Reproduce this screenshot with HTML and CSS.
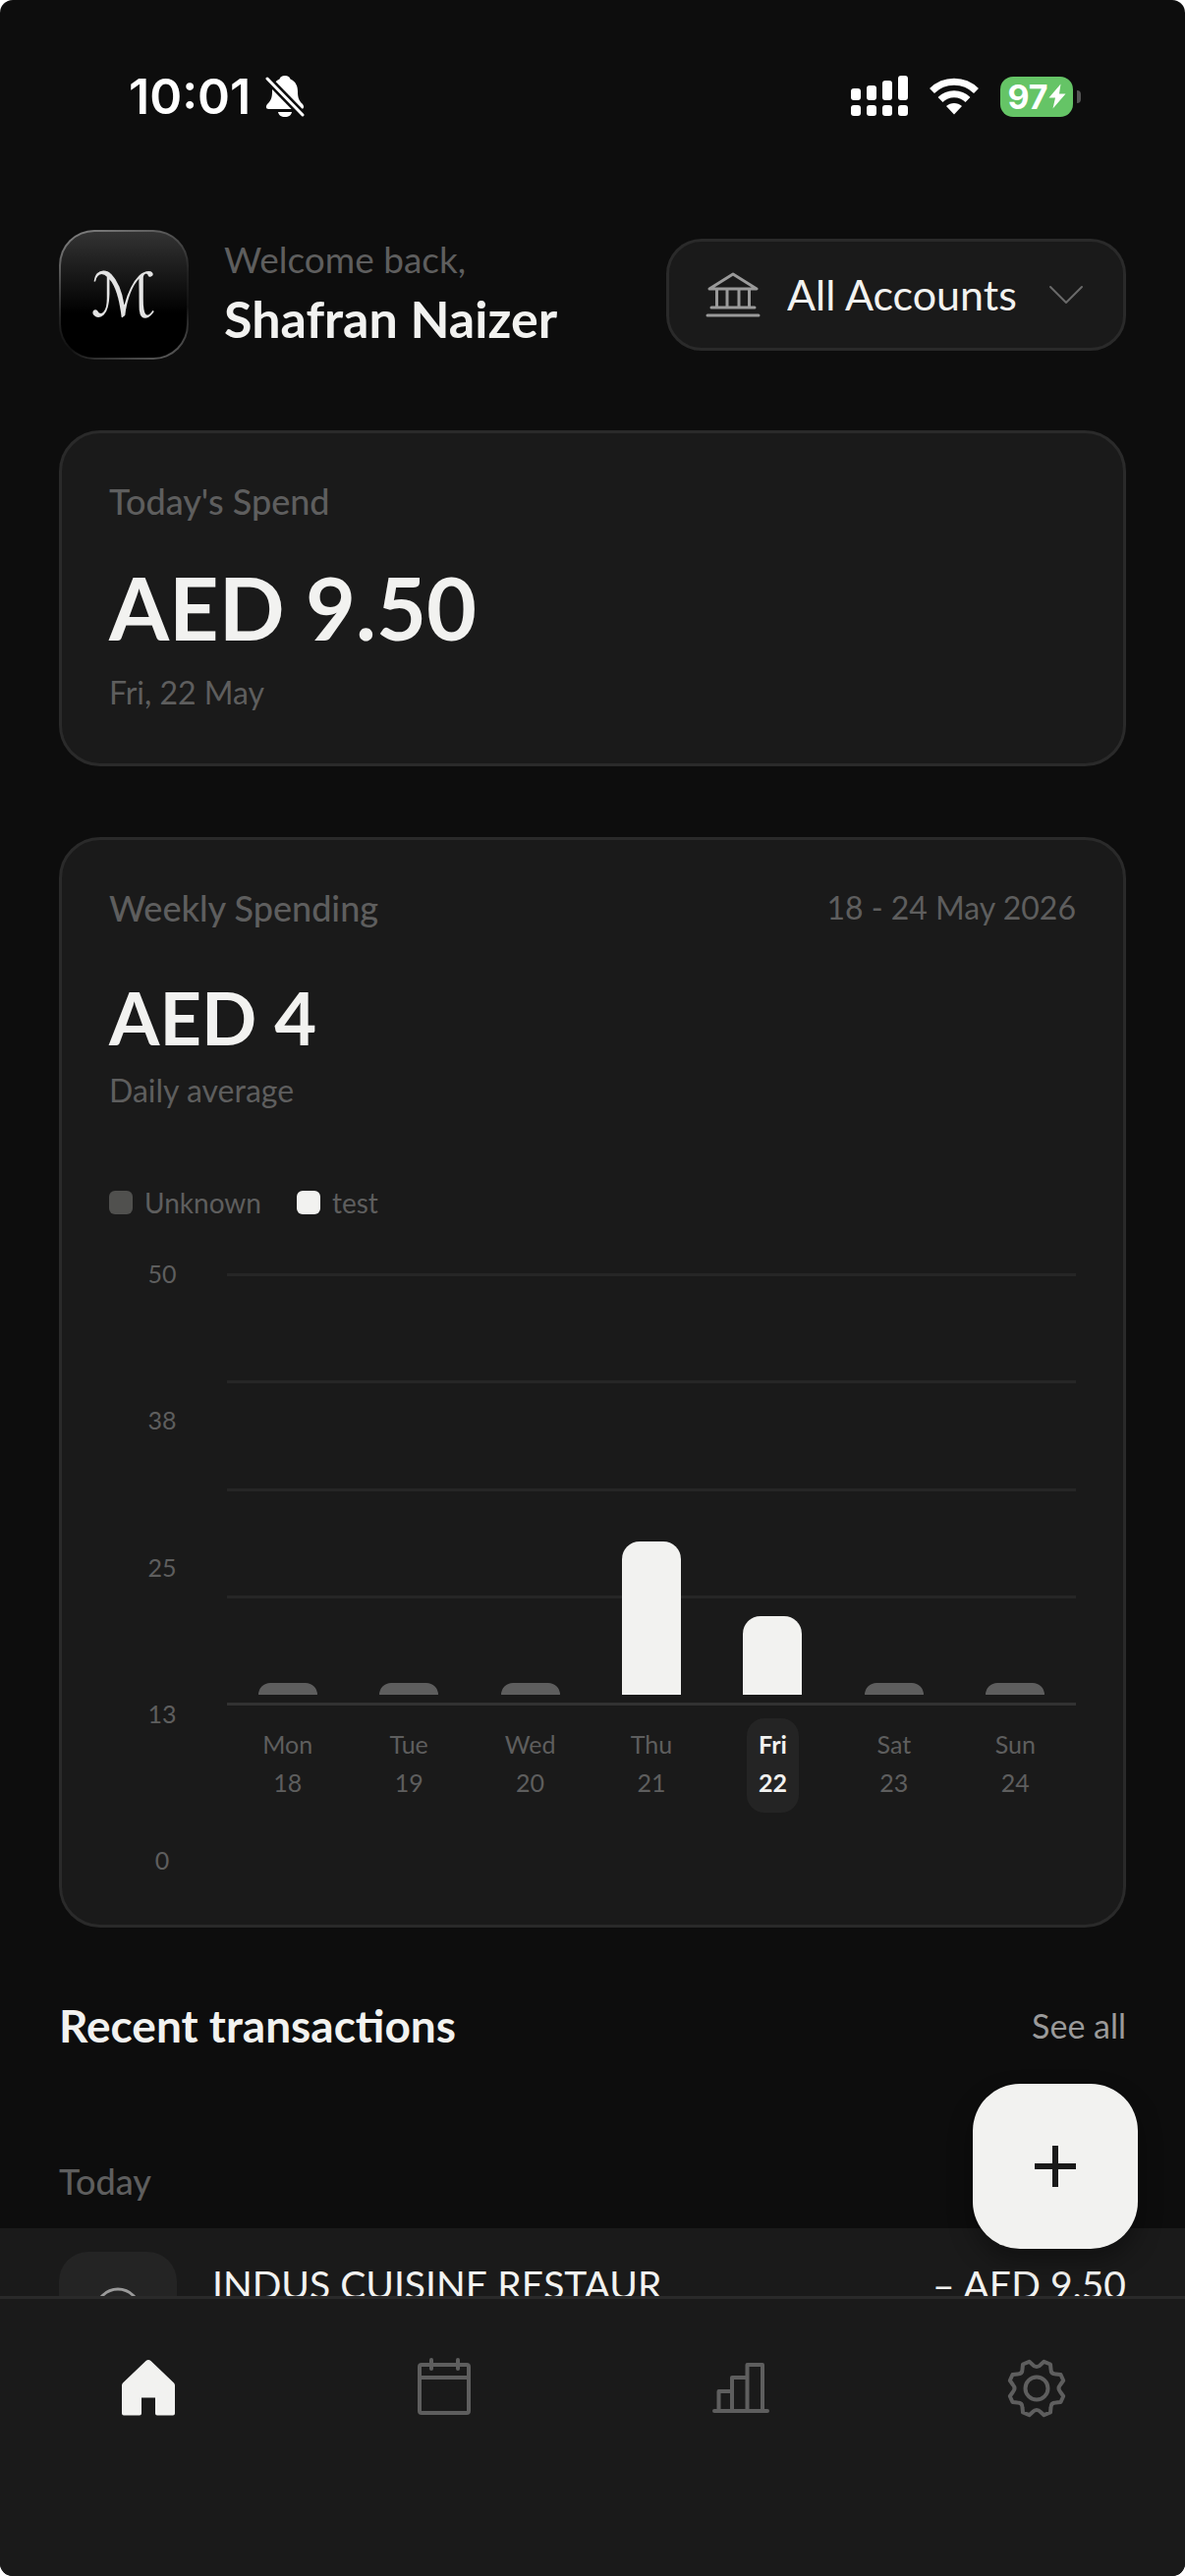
FILE: index.html
```html
<!DOCTYPE html>
<html lang="en">
<head>
    <title>Spending</title>
    <meta charset="UTF-8">
    <meta name="viewport" content="width=device-width, initial-scale=1.0">
    <link rel="stylesheet" href="styles.css">
</head>
<body>
    <div class="app">
        <div class="status-bar">
            <div class="status-left">
                <span class="time">10:01</span>
                <svg class="bell" viewBox="0 0 40 44" width="40" height="44" aria-hidden="true">
                    <path fill="#fff" d="M20 1c-3 0-5 1.500-5.500 3.500C9 7 7 11.500 7 17c0 7-1.500 9.500-4.500 12.500C.5 31.500 0 35 3.500 35h33c3.500 0 3-3.500 1-5.500C34.500 26.500 33 24 33 17c0-5.500-2-10-7.500-12.500C25 2.500 23 1 20 1z"/>
                    <path fill="#fff" d="M13 38h14c-.5 3-3 5-7 5s-6.500-2-7-5z"/>
                    <path stroke="#0d0d0d" stroke-width="8" d="M0 2l39 40"/>
                    <path stroke="#fff" stroke-width="3" stroke-linecap="round" d="M2 4l36 37"/>
                </svg>
            </div>
            <div class="status-right">
                <svg viewBox="0 0 58 42" width="58" height="42" fill="#fff" aria-hidden="true">
                    <rect x="0" y="13" width="10" height="12" rx="3"/>
                    <rect x="16" y="10" width="10" height="15" rx="3"/>
                    <rect x="32" y="5" width="10" height="20" rx="3"/>
                    <rect x="48" y="0" width="10" height="25" rx="3"/>
                    <rect x="0" y="30" width="10" height="11" rx="3"/>
                    <rect x="16" y="30" width="10" height="11" rx="3"/>
                    <rect x="32" y="30" width="10" height="11" rx="3"/>
                    <rect x="48" y="30" width="10" height="11" rx="3"/>
                </svg>
                <svg class="wifi" viewBox="0 0 50 38" width="50" height="38" aria-hidden="true">
                    <g fill="none" stroke="#fff" stroke-width="7">
                        <path d="M2.500 13.500a32 32 0 0 1 45 0"/>
                        <path d="M11 22.500a20 20 0 0 1 28 0"/>
                    </g>
                    <path fill="#fff" d="M25 37.500l-8-8.500c4.500-4 11.500-4 16 0z"/>
                </svg>
                <div class="battery">
                    <span>97</span>
                    <svg viewBox="0 0 18 26" width="18" height="26" aria-hidden="true">
                        <path fill="#fff" d="M12.500.5L.5 14.500h6.500L4.500 25.500 17.500 10.500H11z"/>
                    </svg>
                </div>
                <span class="battery-cap"></span>
            </div>
        </div>

        <main class="content">
            <header class="header">
                <div class="avatar">ℳ</div>
                <div class="greeting">
                    <p class="welcome">Welcome back,</p>
                    <h1>Shafran Naizer</h1>
                </div>
                <label class="account-picker">
                    <svg viewBox="0 0 56 48" width="56" height="48" fill="none" stroke="#9a9a9a" stroke-width="3" stroke-linecap="round" stroke-linejoin="round" aria-hidden="true">
                        <path d="M4 18L28 3l24 15zM11.500 18v18M22 18v18M34 18v18M44.500 18v18M6 37h44M2 45h52"/>
                    </svg>
                    <select aria-label="Account">
                        <option>All Accounts</option>
                    </select>
                    <svg viewBox="0 0 36 20" width="36" height="20" fill="none" stroke="#6a6a6a" stroke-width="2" stroke-linecap="round" stroke-linejoin="round" aria-hidden="true">
                        <path d="M2 2l16 16L34 2"/>
                    </svg>
                </label>
            </header>

            <section class="card today-card">
                <h2 class="card-label">Today's Spend</h2>
                <p class="amount">AED 9.50</p>
                <p class="note">Fri, 22 May</p>
            </section>

            <section class="card weekly-card">
                <div class="card-head">
                    <h2 class="card-label">Weekly Spending</h2>
                    <span class="note">18 - 24 May 2026</span>
                </div>
                <p class="amount">AED 4</p>
                <p class="note">Daily average</p>

                <div class="legend">
                    <span class="legend-item"><i class="swatch"></i>Unknown</span>
                    <span class="legend-item"><i class="swatch swatch-test"></i>test</span>
                </div>

                <div class="chart">
                    <div class="y-axis">
                        <span>50</span><span>38</span><span>25</span><span>13</span><span>0</span>
                    </div>
                    <div class="plot">
                        <div class="plot-area">
                            <div class="grid-lines"><i></i><i></i><i></i><i></i><i></i></div>
                            <div class="bars">
                                <div class="bar" style="height: 12px"></div>
                                <div class="bar" style="height: 12px"></div>
                                <div class="bar" style="height: 12px"></div>
                                <div class="bar filled" style="height: 156px"></div>
                                <div class="bar filled" style="height: 80px"></div>
                                <div class="bar" style="height: 12px"></div>
                                <div class="bar" style="height: 12px"></div>
                            </div>
                        </div>
                        <div class="days">
                            <span class="day">Mon<br>18</span>
                            <span class="day">Tue<br>19</span>
                            <span class="day">Wed<br>20</span>
                            <span class="day">Thu<br>21</span>
                            <span class="day active">Fri<br>22</span>
                            <span class="day">Sat<br>23</span>
                            <span class="day">Sun<br>24</span>
                        </div>
                    </div>
                </div>
            </section>

            <section class="recent">
                <div class="recent-head">
                    <h2>Recent transactions</h2>
                    <a href="#transactions">See all</a>
                </div>
                <h3 class="group-title">Today</h3>
                <div class="transaction" id="transactions">
                    <div class="tile">
                        <svg viewBox="0 0 48 48" width="48" height="48" fill="none" stroke="#9a9a9a" stroke-width="3" aria-hidden="true">
                            <circle cx="24" cy="24" r="22"/>
                        </svg>
                    </div>
                    <span class="merchant">INDUS CUISINE RESTAUR</span>
                    <span class="price">– AED 9.50</span>
                </div>
            </section>
        </main>

        <button type="button" class="add-btn" aria-label="Add transaction">
            <svg viewBox="0 0 42 42" width="42" height="42" stroke="#1a1a1a" stroke-width="6" aria-hidden="true">
                <path d="M21 0v42M0 21h42"/>
            </svg>
        </button>

        <nav class="tab-bar">
            <a href="#home" class="active" aria-label="Home">
                <svg viewBox="0 0 66 66" width="66" height="66" aria-hidden="true">
                    <path fill="#f2f2f0" d="M30.500 5q2.500-2 5 0L59 27.500q1 1 1 2.500v28.500q0 2-2 2H42q-2 0-2-2V42.500H26v16q0 2-2 2H8q-2 0-2-2V30q0-1.500 1-2.500z"/>
                </svg>
            </a>
            <a href="#calendar" aria-label="Calendar">
                <svg viewBox="0 0 66 66" width="66" height="66" fill="none" stroke="#5e5e5e" stroke-width="4" stroke-linecap="round" aria-hidden="true">
                    <rect x="8" y="9" width="50" height="49" rx="2"/>
                    <path d="M8 22h50M20 4v9M47 4v9"/>
                </svg>
            </a>
            <a href="#reports" aria-label="Reports">
                <svg viewBox="0 0 66 66" width="66" height="66" fill="none" stroke="#5e5e5e" stroke-width="4" stroke-linecap="round" stroke-linejoin="round" aria-hidden="true">
                    <path d="M6 56h54M10.500 56V36H24M24 56V22h15M39.500 56V9H55v47"/>
                </svg>
            </a>
            <a href="#settings" aria-label="Settings">
                <svg viewBox="0 0 66 66" width="66" height="66" fill="none" stroke="#5e5e5e" stroke-width="4" stroke-linejoin="round" aria-hidden="true">
                    <circle cx="33" cy="33" r="11.500"/>
                    <path d="M33 11q2.500 0 4-2l3.500-3.200 6.500 2.700.5 5q0 5 5 5l5 .5 2.700 6L57 29.500q-3 3.500 0 7l3.200 4.500-2.700 6-5 .5q-5 0-5 5l-.5 5-6.500 2.700L37 57q-4-4-8 0l-3.500 3.200-6.500-2.700-.5-5q0-5-5-5l-5-.5-2.700-6L9 36.500q3-3.500 0-7L5.800 25l2.700-6 5-.5q5 0 5-5l.5-5 6.500-2.700L29 9q1.500 2 4 2z"/>
                </svg>
            </a>
        </nav>
    </div>
</body>
</html>
```

FILE: styles.css
```css
* {
    box-sizing: border-box;
}

body {
    margin: 0;
    background: #fff;
    font-family: Lato, "Open Sans", sans-serif;
    color: #f2f2f0;
}

h1, h2, h3, p {
    margin: 0;
    font-weight: normal;
}

.app {
    position: relative;
    display: flex;
    flex-direction: column;
    height: 100vh;
    background: #0d0d0d;
    border-radius: 13px;
    overflow: hidden;
}

/* status bar */
.status-bar {
    display: flex;
    justify-content: space-between;
    align-items: center;
    flex-shrink: 0;
    height: 80px;
    margin-top: 58px;
    padding: 0 106px 0 131px;
    font-family: Inter, sans-serif;
    color: #fff;
}

.status-left, .status-right {
    display: flex;
    align-items: center;
}

.time {
    font-size: 50px;
    font-weight: 600;
    line-height: 60px;
}

.bell {
    margin-left: 15px;
}

.wifi {
    margin: 0 22px;
}

.battery {
    display: flex;
    align-items: center;
    justify-content: center;
    width: 74px;
    height: 41px;
    border-radius: 13px;
    background: #65c466;
    font-size: 34px;
    font-weight: 700;
}

.battery-cap {
    width: 4px;
    height: 13px;
    margin-left: 4px;
    border-radius: 0 4px 4px 0;
    background: #555;
}

/* page content */
.content {
    flex: 1;
    min-height: 0;
    padding: 96px 60px 0;
    overflow-y: auto;
    scrollbar-width: none;
}

.header {
    display: flex;
    align-items: center;
    height: 132px;
}

.avatar {
    display: flex;
    align-items: center;
    justify-content: center;
    width: 132px;
    height: 132px;
    border: 2px solid transparent;
    border-radius: 36px;
    background: linear-gradient(#333, #000 65%) padding-box, linear-gradient(160deg, #888, #222 50%, #111 70%, #666) border-box;
    font-family: "DejaVu Serif", "DejaVu Sans", serif;
    font-size: 62px;
    font-style: italic;
    color: #e4e4e4;
}

.greeting {
    flex: 1;
    margin-left: 36px;
}

.welcome {
    font-size: 37px;
    line-height: 48px;
    color: #5e5e5e;
}

.greeting h1 {
    font-size: 52px;
    font-weight: 700;
    line-height: 72px;
}

.account-picker {
    display: flex;
    align-items: center;
    height: 114px;
    padding: 0 40px 0 37px;
    border: 3px solid #2a2a2a;
    border-radius: 36px;
    background: #1a1a1a;
}

.account-picker select {
    appearance: none;
    margin: 0 30px 0 27px;
    padding: 0;
    border: none;
    background: none;
    color: #f2f2f0;
    font-family: inherit;
    font-size: 43px;
    line-height: 54px;
}

.card {
    margin-top: 72px;
    padding: 48px;
    border: 3px solid #2a2a2a;
    border-radius: 42px;
    background: #1a1a1a;
}

.card-head {
    display: flex;
    justify-content: space-between;
}

.card-label {
    font-size: 36px;
    font-weight: 500;
    line-height: 42px;
    color: #5e5e5e;
}

.note {
    font-size: 32px;
    line-height: 42px;
    color: #5e5e5e;
}

.amount {
    font-weight: 700;
}

.today-card {
    padding-bottom: 51px;
}

.today-card .amount {
    margin: 33px 0 12px;
    font-size: 88px;
    line-height: 108px;
}

.weekly-card .amount {
    margin: 46px 0 8px;
    font-size: 74px;
    line-height: 90px;
}

.legend {
    display: flex;
    gap: 36px;
    margin: 75px 0 36px;
    font-size: 28px;
    line-height: 36px;
    color: #5e5e5e;
}

.legend-item {
    display: flex;
    align-items: center;
    gap: 12px;
}

.swatch {
    width: 24px;
    height: 24px;
    border-radius: 6px;
    background: #50504e;
}

.swatch-test {
    background: #f2f2f0;
}

/* chart */
.chart {
    display: flex;
    gap: 12px;
    height: 633px;
    font-size: 25px;
    color: #5e5e5e;
}

.y-axis {
    display: flex;
    flex-direction: column;
    justify-content: space-between;
    width: 108px;
    line-height: 36px;
    text-align: center;
}

.plot {
    flex: 1;
    padding-top: 18px;
}

.plot-area {
    display: grid;
    height: 440px;
}

.grid-lines, .bars {
    grid-area: 1 / 1;
}

.grid-lines {
    display: flex;
    flex-direction: column;
    justify-content: space-between;
}

.grid-lines i {
    height: 3px;
    background: #262626;
}

.grid-lines i:last-child {
    background: #323232;
}

.bars {
    display: grid;
    grid-template-columns: repeat(7, 1fr);
    align-items: end;
    justify-items: center;
    padding-bottom: 11px;
}

.bar {
    width: 60px;
    border-radius: 12px 12px 0 0;
    background: #5e5e5e;
}

.bar.filled {
    border-radius: 18px 18px 0 0;
    background: #f2f2f0;
}

.days {
    display: grid;
    grid-template-columns: repeat(7, 1fr);
    justify-items: center;
    margin-top: 13px;
    line-height: 39px;
    text-align: center;
}

.day {
    padding: 7px 12px 11px;
    border-radius: 18px;
}

.day.active {
    background: #242424;
    color: #f2f2f0;
    font-weight: 700;
}

/* transactions */
.recent-head {
    display: flex;
    justify-content: space-between;
    align-items: center;
    margin-top: 70px;
    line-height: 60px;
}

.recent-head h2 {
    font-size: 46px;
    font-weight: 700;
}

.recent-head a {
    color: #9a9a9a;
    font-size: 34px;
    text-decoration: none;
}

.group-title {
    margin: 107px 0 27px;
    font-size: 36px;
    font-weight: 500;
    line-height: 42px;
    color: #5e5e5e;
}

.transaction {
    display: flex;
    margin: 0 -60px;
    padding: 24px 60px;
    background: #1a1a1a;
    font-size: 39px;
    line-height: 66px;
}

.tile {
    display: flex;
    align-items: center;
    justify-content: center;
    width: 120px;
    height: 120px;
    border-radius: 30px;
    background: #242424;
}

.merchant {
    flex: 1;
    margin-left: 36px;
}

.add-btn {
    position: absolute;
    right: 48px;
    bottom: 333px;
    display: flex;
    align-items: center;
    justify-content: center;
    width: 168px;
    height: 168px;
    border: none;
    border-radius: 48px;
    background: #f2f2f0;
    box-shadow: 0 12px 24px rgba(0, 0, 0, 0.35);
    cursor: pointer;
}

.tab-bar {
    display: flex;
    flex-shrink: 0;
    height: 285px;
    padding-top: 58px;
    border-top: 3px solid #2a2a2a;
    background: #1a1a1a;
}

.tab-bar a {
    flex: 1;
    text-align: center;
}
```
